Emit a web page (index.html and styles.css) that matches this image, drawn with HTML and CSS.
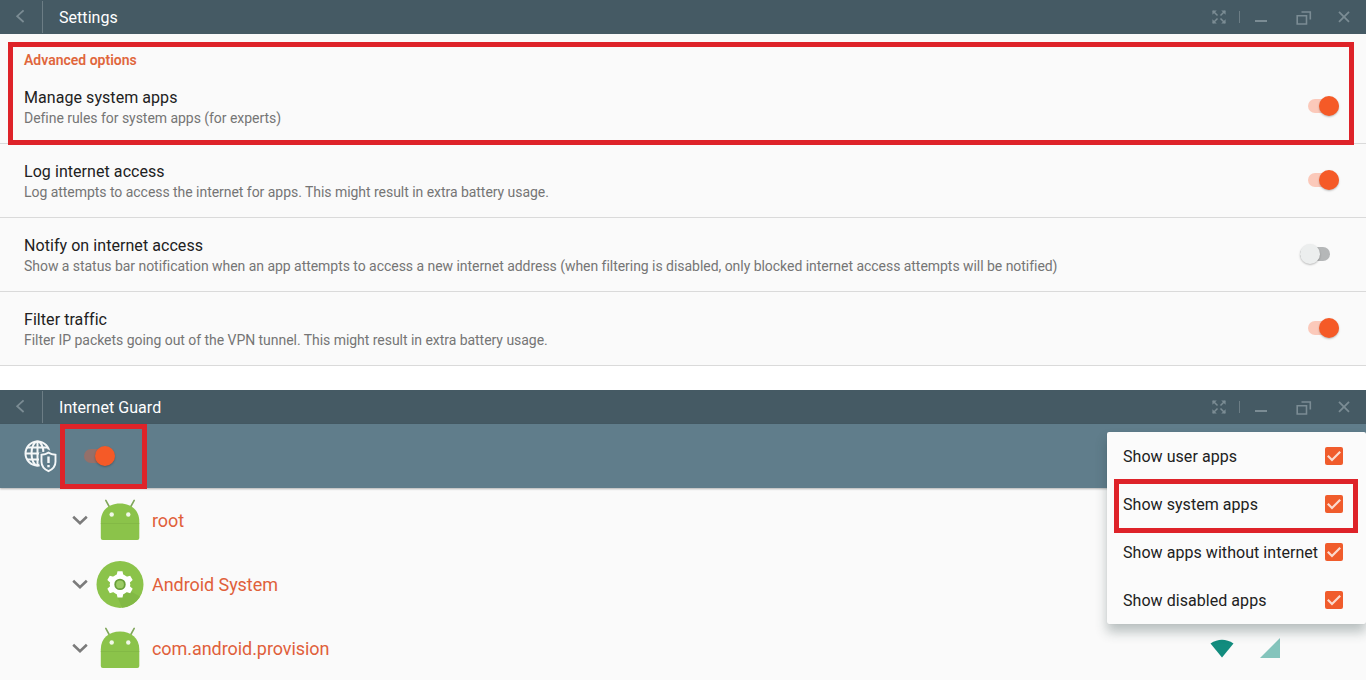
FILE: index.html
```html
<!DOCTYPE html>
<html lang="en">
<head>
  <meta charset="UTF-8">
  <meta name="viewport" content="width=device-width, initial-scale=1.0">
  <title>Internet Guard</title>
  <link rel="stylesheet" href="styles.css">
</head>
<body>

  <!-- Shared icons -->
  <svg class="sprite" width="0" height="0">
    <symbol id="back" viewBox="0 0 10 16"><path d="M8.6 1.4 2.2 7.2l6.4 5.8" fill="none" stroke="currentColor" stroke-width="1.8"/></symbol>
    <symbol id="expand" viewBox="0 0 14 14">
      <path d="M1 1l4.5 4.500M13 1 8.500 5.500M1 13l4.500-4.500M13 13 8.500 8.500" stroke="currentColor" stroke-width="1.500"/>
      <path d="M.4.4h4.400L.4 4.800zM13.600.4v4.400L9.200.4zM.4 13.600V9.200l4.400 4.400zM13.600 13.600H9.200l4.400-4.400z" fill="currentColor"/>
    </symbol>
    <symbol id="restore" viewBox="0 0 16 14"><path d="M1.2 4.700h9.300v8.300H1.200zM5.500 1h8.800v7.600" fill="none" stroke="currentColor" stroke-width="1.600"/></symbol>
    <symbol id="close" viewBox="0 0 12 12"><path d="M1 .8l10 10M11 .8 1 10.800" stroke="currentColor" stroke-width="1.800"/></symbol>
    <symbol id="chevron" viewBox="0 0 16 10"><path d="M1.200 1.700 8 8.100l6.800-6.400" fill="none" stroke="#7b7b7b" stroke-width="2.600"/></symbol>
    <symbol id="tick" viewBox="0 0 18 18"><path d="M2.800 8.800 7 13 15.200 4.800" fill="none" stroke="#fbdcd0" stroke-width="2.200"/></symbol>
    <symbol id="droid" viewBox="0 0 48 48">
      <path d="M14 12 9.800 4.400M34 12l4.200-7.600" stroke="#7fa65a" stroke-width="1.600" stroke-linecap="round"/>
      <path d="M4.800 25.500C4.800 14 13 7.600 24 7.600S43.300 14 43.300 25.500V42q0 2-2 2H6.800q-2 0-2-2z" fill="#8bc34a"/>
      <path d="M4.800 27.500h38.500" stroke="#80b544" stroke-width=".7"/>
      <circle cx="15.700" cy="18.500" r="2.200" fill="#f1f8e9"/>
      <circle cx="32.300" cy="18.500" r="2.200" fill="#f1f8e9"/>
    </symbol>
  </svg>

  <!-- Settings window -->
  <div class="window settings">
    <div class="titlebar">
      <div class="back"><svg width="10" height="16"><use href="#back"/></svg></div>
      <div class="title">Settings</div>
      <div class="controls">
        <svg width="14" height="14"><use href="#expand"/></svg>
        <span class="sep"></span>
        <span class="minimize"></span>
        <svg class="restore" width="16" height="14"><use href="#restore"/></svg>
        <svg class="close" width="12" height="12"><use href="#close"/></svg>
      </div>
    </div>

    <div class="group">
      <h2>Advanced options</h2>
      <div class="option">
        <div>
          <h3>Manage system apps</h3>
          <p>Define rules for system apps (for experts)</p>
        </div>
        <span class="switch on"></span>
      </div>
      <div class="frame frame-group"></div>
    </div>
    <div class="option">
      <div>
        <h3>Log internet access</h3>
        <p>Log attempts to access the internet for apps. This might result in extra battery usage.</p>
      </div>
      <span class="switch on"></span>
    </div>
    <div class="option">
      <div>
        <h3>Notify on internet access</h3>
        <p>Show a status bar notification when an app attempts to access a new internet address (when filtering is disabled, only blocked internet access attempts will be notified)</p>
      </div>
      <span class="switch off"></span>
    </div>
    <div class="option">
      <div>
        <h3>Filter traffic</h3>
        <p>Filter IP packets going out of the VPN tunnel. This might result in extra battery usage.</p>
      </div>
      <span class="switch on"></span>
    </div>
  </div>

  <!-- Internet Guard window -->
  <div class="window guard">
    <div class="titlebar">
      <div class="back"><svg width="10" height="16"><use href="#back"/></svg></div>
      <div class="title">Internet Guard</div>
      <div class="controls">
        <svg width="14" height="14"><use href="#expand"/></svg>
        <span class="sep"></span>
        <span class="minimize"></span>
        <svg class="restore" width="16" height="14"><use href="#restore"/></svg>
        <svg class="close" width="12" height="12"><use href="#close"/></svg>
      </div>
    </div>

    <div class="toolbar">
      <svg class="logo" width="34" height="34" viewBox="0 0 34 34" fill="none" stroke="#f4f7f8">
        <g stroke-width="2">
          <circle cx="13.500" cy="13.500" r="12"/>
          <ellipse cx="13.500" cy="13.500" rx="6" ry="12"/>
          <path d="M13.500 1.500v24M1.500 13.500h24M3 7.500h21M3 19.500h21"/>
        </g>
        <path d="M24.500 12.600c2.300 1.500 4.400 2 7 2.200v7c0 4.500-2.800 7.500-7 9.400-4.200-1.900-7-4.900-7-9.400v-7c2.600-.2 4.700-.7 7-2.200z" fill="#607d8b" stroke="#607d8b" stroke-width="5"/>
        <path d="M24.500 12.600c2.300 1.500 4.400 2 7 2.200v7c0 4.500-2.800 7.500-7 9.400-4.200-1.900-7-4.900-7-9.400v-7c2.600-.2 4.700-.7 7-2.200z" stroke-width="1.900"/>
        <path d="M24.500 16.500v6.500M24.500 25v2.200" stroke-width="2.400"/>
      </svg>
      <div class="master"><span class="switch on"></span></div>
    </div>

    <ul class="apps">
      <li>
        <svg class="chevron" width="16" height="10"><use href="#chevron"/></svg>
        <svg width="48" height="48"><use href="#droid"/></svg>
        <span>root</span>
      </li>
      <li>
        <svg class="chevron" width="16" height="10"><use href="#chevron"/></svg>
        <svg width="48" height="48" viewBox="0 0 48 48">
          <circle cx="24" cy="24.400" r="23.500" fill="#8bc34a"/>
          <path d="M34 31 44 36.500A23.500 23.500 0 0 1 26 47.800L21 36z" fill="#82b945"/>
          <circle cx="24" cy="24.400" r="10.300" fill="#fff"/>
          <path d="M21.500 11.200h5l1.200 5.500h-7.400zM21.500 37.600h5l1.200-5.500h-7.400z" fill="#fff"/>
          <path d="M21.500 11.200h5l1.200 5.500h-7.400zM21.500 37.600h5l1.200-5.500h-7.400z" fill="#fff" transform="rotate(60 24 24.400)"/>
          <path d="M21.500 11.200h5l1.200 5.500h-7.400zM21.500 37.600h5l1.200-5.500h-7.400z" fill="#fff" transform="rotate(120 24 24.400)"/>
          <circle cx="24" cy="24.400" r="4.800" fill="#9ccc65" stroke="#689f38" stroke-width="1.800"/>
        </svg>
        <span>Android System</span>
      </li>
      <li>
        <svg class="chevron" width="16" height="10"><use href="#chevron"/></svg>
        <svg width="48" height="48"><use href="#droid"/></svg>
        <span>com.android.provision</span>
        <div class="network">
          <svg width="24" height="19" viewBox="0 0 24 19"><path d="M.500 4.500Q12-3 23.500 4.500L12 18.500z" fill="#128c7e"/></svg>
          <svg width="20" height="20" viewBox="0 0 20 20"><path d="M20 0v20H0z" fill="#84c4bc"/></svg>
        </div>
      </li>
    </ul>

    <!-- Overflow menu -->
    <div class="menu">
      <div class="item"><span>Show user apps</span><svg class="check" width="18" height="18"><use href="#tick"/></svg></div>
      <div class="item"><span>Show system apps</span><svg class="check" width="18" height="18"><use href="#tick"/></svg></div>
      <div class="item"><span>Show apps without internet</span><svg class="check" width="18" height="18"><use href="#tick"/></svg></div>
      <div class="item"><span>Show disabled apps</span><svg class="check" width="18" height="18"><use href="#tick"/></svg></div>
      <div class="frame frame-menu"></div>
    </div>
  </div>

</body>
</html>
```
FILE: styles.css
```css
* {
  box-sizing: border-box;
}
body {
  margin: 0;
  font-family: Roboto, sans-serif;
  background-color: #fff;
  color: #212121;
  overflow: hidden;
}
svg {
  display: block;
  flex: none;
}
.sprite {
  position: absolute;
}
.window {
  background-color: #fafafa;
}
.settings {
  margin-bottom: 24px;
}
.guard {
  position: relative;
  height: 290px;
}

/* Title bar */
.titlebar {
  display: flex;
  align-items: center;
  height: 34px;
  background-color: #455a64;
  color: #7b8c94;
}
.back {
  display: flex;
  align-items: center;
  width: 43px;
  height: 32px;
  padding-left: 15px;
  border-right: 1px solid #6c7d85;
}
.title {
  padding-left: 16px;
  font-size: 16px;
  letter-spacing: 0.05px;
  color: #fff;
}
.controls {
  display: flex;
  align-items: center;
  margin-left: auto;
  padding-right: 16px;
}
.sep {
  width: 1px;
  height: 12px;
  margin: 0 15px 0 13px;
  background-color: #6c7d85;
}
.minimize {
  width: 12px;
  height: 2px;
  margin-top: 8px;
  background-color: #7b8c94;
}
.restore {
  margin: 2px 26px 0 29px;
}

/* Settings */
.group {
  position: relative;
  padding-top: 17px;
}
.group h2 {
  margin: 0;
  padding-left: 24px;
  font-size: 14px;
  line-height: 19px;
  font-weight: 600;
  color: #e0663c;
}
.option {
  display: flex;
  align-items: center;
  justify-content: space-between;
  height: 74px;
  padding: 0 27px 1px 24px;
  border-bottom: 1px solid #dadada;
}
.option h3 {
  margin: 0;
  padding-top: 2px;
  font-size: 16px;
  line-height: 22px;
  font-weight: 400;
  letter-spacing: 0.06px;
}
.option p {
  margin: 0;
  font-size: 14px;
  line-height: 19px;
  letter-spacing: -0.04px;
  color: #757575;
}

/* Switches */
.switch {
  display: flex;
  align-items: center;
  flex: none;
  width: 31px;
  height: 14px;
  border-radius: 7px;
  background-color: #fbc9ba;
}
.switch::before {
  content: "";
  width: 20px;
  height: 20px;
  border-radius: 50%;
  background-color: #f55a27;
  box-shadow: 0 1px 2px rgba(0, 0, 0, 0.25);
}
.switch.on {
  justify-content: flex-end;
}
.switch.off {
  margin-right: 9px;
  width: 30px;
  background-color: #b5b7b8;
}
.switch.off::before {
  background-color: #eceeee;
}

/* Toolbar */
.toolbar {
  display: flex;
  align-items: center;
  height: 64px;
  background-color: #607d8b;
  box-shadow: 0 1px 2px rgba(0, 0, 0, 0.3);
}
.logo {
  margin: 1px 2px 0 24px;
}
.master {
  display: flex;
  align-items: center;
  justify-content: flex-end;
  width: 87px;
  height: 65px;
  padding-right: 27px;
  border: 5px solid #de2329;
}
.master .switch {
  background-color: #94706a;
}

/* Application list */
.apps {
  margin: 0;
  padding: 0;
  list-style-type: none;
}
.apps li {
  display: flex;
  align-items: center;
  height: 64px;
  padding: 0 86px 0 72px;
  font-size: 18px;
  letter-spacing: -0.06px;
  color: #e0603a;
}
.chevron {
  margin-right: 8px;
}
.apps span {
  margin-left: 8px;
}
.network {
  display: flex;
  align-items: center;
  gap: 26px;
  margin-left: auto;
}

/* Menu */
.menu {
  position: absolute;
  top: 42px;
  right: 0;
  width: 259px;
  background-color: #fbfbfb;
  border-radius: 2px;
  box-shadow: 0 8px 12px rgba(38, 60, 60, 0.3), 0 0 1px rgba(0, 0, 0, 0.15);
}
.item {
  display: flex;
  align-items: center;
  justify-content: space-between;
  height: 48px;
  padding: 0 23px 0 16px;
  font-size: 16px;
  letter-spacing: 0.05px;
  white-space: nowrap;
}
.check {
  border-radius: 2px;
  background-color: #f05c2c;
}

/* Red highlights */
.frame {
  position: absolute;
  border: 5px solid #de2329;
}
.frame-group {
  top: 8px;
  right: 12px;
  bottom: -1px;
  left: 8px;
}
.frame-menu {
  top: 47px;
  right: 8px;
  left: 7px;
  height: 54px;
}
```
